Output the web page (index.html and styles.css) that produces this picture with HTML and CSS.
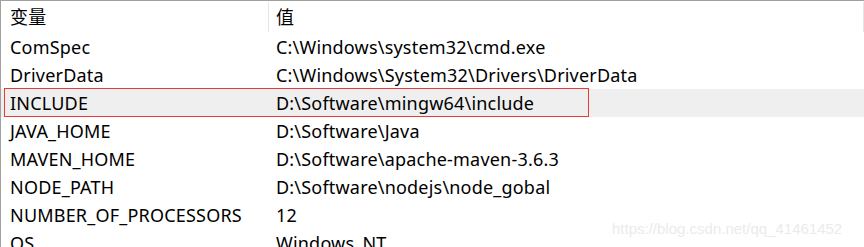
FILE: index.html
```html
<!DOCTYPE html>
<html lang="zh">
<head>
<meta charset="utf-8">
<link rel="stylesheet" href="styles.css">
</head>
<body>
<div class="list">
  <div class="head">
    <div class="hcell c1">变量</div>
    <div class="hcell c2">值</div>
  </div>
  <div class="row"><div class="c1">ComSpec</div><div class="c2">C:\Windows\system32\cmd.exe</div></div>
  <div class="row"><div class="c1">DriverData</div><div class="c2">C:\Windows\System32\Drivers\DriverData</div></div>
  <div class="row sel"><div class="c1">INCLUDE</div><div class="c2">D:\Software\mingw64\include</div><div class="mark"></div></div>
  <div class="row"><div class="c1">JAVA_HOME</div><div class="c2">D:\Software\Java</div></div>
  <div class="row"><div class="c1">MAVEN_HOME</div><div class="c2">D:\Software\apache-maven-3.6.3</div></div>
  <div class="row"><div class="c1">NODE_PATH</div><div class="c2">D:\Software\nodejs\node_gobal</div></div>
  <div class="row"><div class="c1">NUMBER_OF_PROCESSORS</div><div class="c2">12</div></div>
  <div class="row"><div class="c1">OS</div><div class="c2">Windows_NT</div></div>
  <div class="wm">https://blog.csdn.net/qq_41461452</div>
</div>
</body>
</html>
```
FILE: styles.css
```css
html, body {
  margin: 0;
  padding: 0;
  background: #fff;
  overflow: hidden;
}
.list {
  position: relative;
  width: 864px;
  height: 247px;
  box-sizing: border-box;
  border-top: 1px solid #a0a0a0;
  border-left: 1px solid #a0a0a0;
  font-family: "Noto Sans", "Noto Sans CJK SC", sans-serif;
  font-size: 18px;
  letter-spacing: 0.2px;
  color: #000;
  overflow: hidden;
}
.head {
  display: grid;
  grid-template-columns: 267px 1fr;
  height: 32px;
}
.hcell {
  display: flex;
  align-items: center;
  padding-bottom: 3px;
}
.head .c2 {
  border-left: 1px solid #e5e5e5;
  border-right: 1px solid #e5e5e5;
  margin: 1px 0;
}
.row {
  position: relative;
  display: grid;
  grid-template-columns: 267px 1fr;
  height: 28px;
  align-items: center;
}
.c1 {
  padding-left: 9px;
  white-space: nowrap;
}
.c2 {
  padding-left: 8px;
  white-space: nowrap;
}
.head .c2 { padding-left: 7px; }
.sel {
  background: #efefef;
}
.mark {
  position: absolute;
  left: 3px;
  top: -1px;
  width: 585px;
  height: 29px;
  box-sizing: border-box;
  border: 1px solid #e8393b;
}
.wm {
  position: absolute;
  left: 611px;
  top: 219px;
  font-family: "Liberation Sans", Arial, sans-serif;
  font-size: 15px;
  letter-spacing: 0;
  color: #ebebeb;
}
```
